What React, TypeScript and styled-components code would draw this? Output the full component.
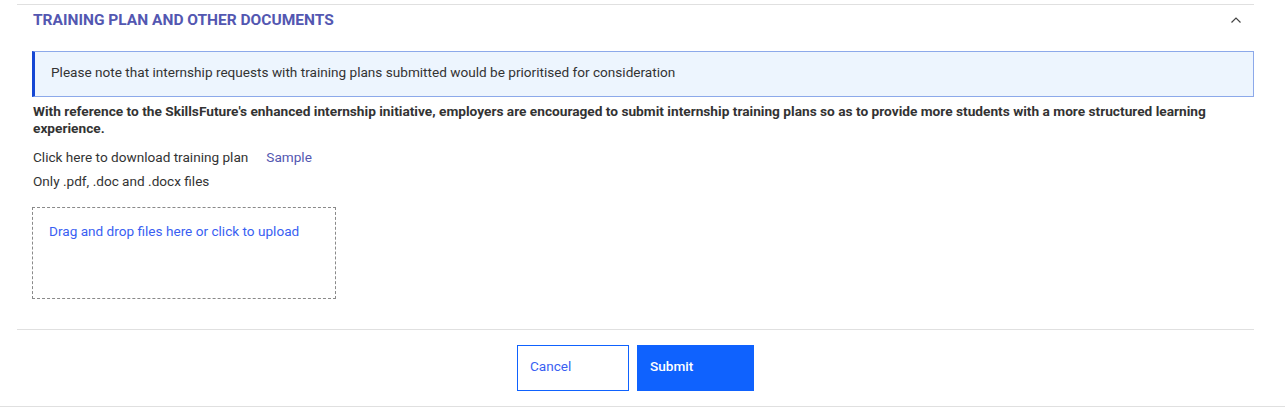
import React from "react";
import styled, { createGlobalStyle } from "styled-components";

const Global = createGlobalStyle`
  html, body { margin: 0; padding: 0; background: #fff; }
  body { font-family: Roboto, "Liberation Sans", Arial, sans-serif; color: #333; }
  * { box-sizing: border-box; }
`;

const Page = styled.div`
  padding-top: 4px;
  width: 1285px;
`;

const Panel = styled.section`
  margin-left: 17px;
  width: 1237px;
  border-top: 1px solid #e0e0e0;
`;

const Header = styled.div`
  height: 29px;
  display: flex;
  align-items: center;
  justify-content: space-between;
  padding: 0 12px 0 16px;
`;

const Title = styled.h2`
  margin: 0;
  font-size: 15.5px;
  font-weight: 700;
  color: #5357b1;
`;

const Body = styled.div`
  padding: 17px 0 30px 15px;
`;

const InfoBox = styled.div`
  height: 46px;
  display: flex;
  align-items: center;
  padding: 0 0 5px 16px;
  background: #edf5fe;
  border: 1px solid #8ca9ea;
  border-left: 3px solid #1547d4;
  font-size: 13.6px;
  color: #333;
`;

const Lead = styled.p`
  margin: 6px 0 0 1px;
  font-size: 13.7px;
  line-height: 17px;
  font-weight: 700;
  color: #333;
`;

const Line = styled.div`
  margin-left: 1px;
  font-size: 13.6px;
  line-height: 24px;
  color: #333;
  display: flex;
  gap: 18px;
`;

const Lines = styled.div`
  margin-top: 8px;
`;

const Link = styled.a`
  color: #5357b1;
  text-decoration: none;
  cursor: pointer;
`;

const Dropzone = styled.div`
  margin-top: 14px;
  width: 304px;
  height: 92px;
  border: 1px dashed #8a8a8a;
  padding: 15px 16px;
  font-size: 13.6px;
  line-height: 17px;
  color: #3a5ff2;
  cursor: pointer;
`;

const Footer = styled.div`
  border-top: 1px solid #e0e0e0;
  margin-left: 17px;
  width: 1237px;
  padding: 15px 0 15px;
  display: flex;
  justify-content: center;
  gap: 8px;
`;

const BottomRule = styled.div`
  border-top: 1px solid #e0e0e0;
`;

const Button = styled.button<{ $primary?: boolean; $w: number }>`
  width: ${(p) => p.$w}px;
  height: 46px;
  padding: 0 12px 4px;
  text-align: left;
  font-family: Roboto, "Liberation Sans", Arial, sans-serif;
  font-size: 13.6px;
  font-weight: ${(p) => (p.$primary ? 500 : 400)};
  background: ${(p) => (p.$primary ? "#0f62fe" : "#fff")};
  color: ${(p) => (p.$primary ? "#fff" : "#3a5ff2")};
  border: 1px solid #0f62fe;
  border-radius: 0;
  cursor: pointer;
`;

const Chevron = () => (
  <svg width="12" height="8" viewBox="0 0 12 8" fill="none">
    <path d="M1.5 6.5 L6 2 L10.5 6.5" stroke="#444" strokeWidth="1.2" />
  </svg>
);

export default function App() {
  return (
    <>
      <Global />
      <Page>
        <Panel>
          <Header>
            <Title>TRAINING PLAN AND OTHER DOCUMENTS</Title>
            <Chevron />
          </Header>
          <Body>
            <InfoBox>
              Please note that internship requests with training plans submitted would be prioritised for consideration
            </InfoBox>
            <Lead>
              With reference to the SkillsFuture's enhanced internship initiative, employers are encouraged to submit internship training plans so as to provide more students with a more structured learning experience.
            </Lead>
            <Lines>
              <Line>
                <span>Click here to download training plan</span>
                <Link>Sample</Link>
              </Line>
              <Line>Only .pdf, .doc and .docx files</Line>
            </Lines>
            <Dropzone>Drag and drop files here or click to upload</Dropzone>
          </Body>
        </Panel>
        <Footer>
          <Button $w={112}>Cancel</Button>
          <Button $w={117} $primary>
            Submit
          </Button>
        </Footer>
        <BottomRule />
      </Page>
    </>
  );
}
